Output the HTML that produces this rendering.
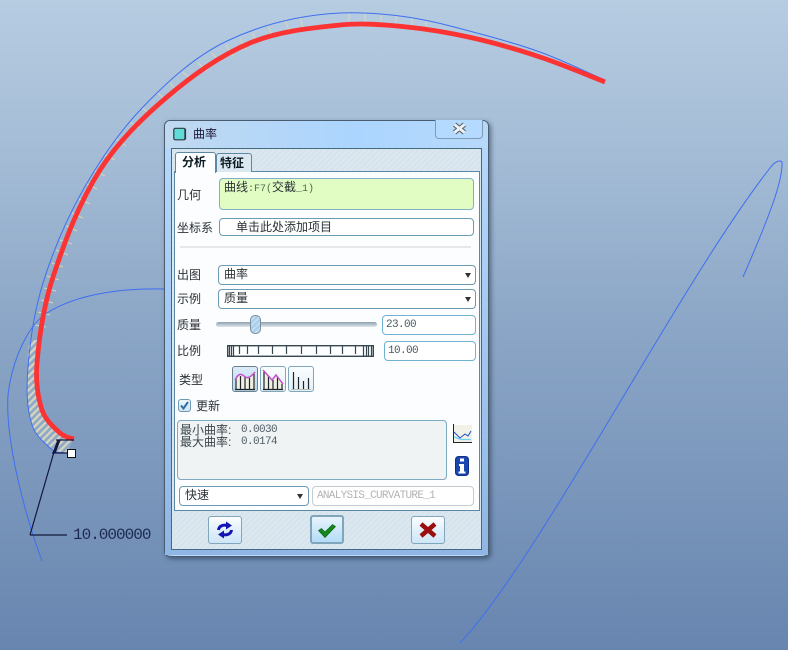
<!DOCTYPE html>
<html>
<head>
<meta charset="utf-8">
<style>
html,body{margin:0;padding:0;width:788px;height:650px;overflow:hidden}
body{position:relative;background:linear-gradient(180deg,#b6cce1 0%,#a3bbd5 25%,#8ba6c6 50%,#7a96bb 75%,#6785af 100%);font-family:"Liberation Sans","Noto Sans CJK SC",sans-serif;font-size:12px;color:#2b3236}
.a{position:absolute;box-sizing:border-box}
.l{position:absolute;line-height:16px;white-space:nowrap}
.f{position:absolute;box-sizing:border-box;background:#fff;border:1px solid #6d9ab3;border-radius:4px;line-height:17px;white-space:nowrap}
.arr{position:absolute;width:0;height:0;border-left:3.5px solid transparent;border-right:3.5px solid transparent;border-top:5px solid #333}
.btn{position:absolute;box-sizing:border-box;border:1px solid #7fa6bb;border-radius:3px;background:linear-gradient(180deg,#fbfdfe,#dceefa 60%,#cfe6f8)}
.stripe{background:repeating-linear-gradient(135deg,#dce8f0 0 2px,#d6e3ec 2px 4px)}
.m{font-family:"Liberation Mono","Noto Sans CJK SC",monospace}
.n{font-size:11px;letter-spacing:-.6px}
</style>
</head>
<body>
<svg class="a" style="left:0;top:0" width="788" height="650" viewBox="0 0 788 650">
<defs>
<pattern id="h" width="5" height="5" patternUnits="userSpaceOnUse" patternTransform="rotate(-45)">
<rect width="5" height="5" fill="#8fa9c6"/><rect width="5" height="2.2" fill="#d8d6c0"/>
</pattern>
</defs>
<path d="M30 340 C27 355 28 360 28 367 C26.500 386 26.100 406.500 32 425 C35.600 436 45.900 444.500 55 452 L66 453 L74 439 C69 438 63.700 436.400 60 433 C52.800 426.500 45 419 42 410 C37 395 35.700 379 37 363 L40 340 Z" fill="url(#h)"/>
<g stroke="#d9d6b8" stroke-width="1" fill="none">
<path d="M349 14V24M365 14V24M381 15V24M396 16V25M412 18V27M426 21V29M300 17L303 28M285 19L289 31M268 26L273 37M252 33L258 42M240 39L247 50M226 45L233 56M212 53L220 62M198 63L207 71M183 72L192 80M170 83L178 92M157 92L165 100M142 107L150 115M130 122L139 128M116 139L126 146M105 155L115 160M95 171L105 176M87 184L97 189M79 199L90 204M72 213L83 218M66 226L77 231M60 240L72 244M56 250L68 255M52 263L63 267M47 276L59 280M44 288L56 291M41 300L53 303M38 312L50 315M35 325L46 327"/>
</g>
<g fill="none" stroke="#3f6ff0" stroke-width="1">
<path d="M605 80 C583.300 70.800 562.200 60 540 52 C518.100 44.100 495.500 37.900 473 32 C451.100 26.200 429.400 20.200 407 17 C384.900 13.900 362.300 12 340 13 C301.200 15 262 24.300 227 41 C194.900 56.300 167.700 81.400 143 107 C119.400 131.400 99.800 160.500 83 190 C66.400 219.300 53 250.800 43 283 C34.600 310.100 30.200 338.700 28 367 C26.500 386.300 26.100 406.500 32 425 C35.600 436.200 45.900 444.500 55 452 L66 453"/>
<path d="M165 289 C130 288 80 292 47 313 C28 325 12 360 8 395 C5 440 25 515 42 561"/>
<path d="M460 643 C540 558 680 283 770 168 C775 161 780 160 782 162 C783 180 770 215 743 277"/>
</g>
<path d="M605 82 C583.300 73.400 562.100 64.400 540 57 C518 49.700 495.600 43.100 473 38 C451.300 33.100 429.200 29.200 407 27 C384.800 24.800 362.200 22.700 340 25 C309.600 28.100 278.200 31.200 250 43 C219.500 55.700 192.200 75.700 167 97 C141.800 118.300 117.700 142.100 100 170 C79.100 203 65.100 239.900 53 277 C44 304.600 39.400 334.100 37 363 C35.700 378.700 37.100 395.100 42 410 C45 419.200 52.800 426.500 60 433 C63.700 436.400 69.100 438 74 439" fill="none" stroke="#fb3333" stroke-width="4.800"/>
<g stroke="#12183c" fill="none">
<path d="M30 535H67" stroke-width="1.200"/>
<path d="M30 535L54 452" stroke-width="1.200"/>
<path d="M59 440L54 453" stroke-width="3"/>
<path d="M56 440H74" stroke-width="1.200"/>
<path d="M52 453H68" stroke-width="1.200"/>
</g>
<rect x="67.500" y="449.500" width="8" height="8" fill="#fff" stroke="#111" stroke-width="1"/>
</svg>
<div class="l m" style="left:73px;top:527px;font-size:16px;letter-spacing:-1px;color:#1c2a52">10.000000</div>

<!-- dialog -->
<div class="a" style="left:164px;top:120px;width:325px;height:437px;border:1px solid #4a5d70;border-radius:6px;background:linear-gradient(90deg,#8eb6e3 0,#b8dafb 3%,#b8dafb 97%,#8eb6e3 100%);box-shadow:2px 2px 5px rgba(30,45,70,.55)"></div>
<div class="a" style="left:165px;top:121px;width:323px;height:27px;border-radius:5px 5px 0 0;background:linear-gradient(90deg,#c0d9f0,#abd5ff 60%,#b7d9fa)"></div>
<div class="a" style="left:165px;top:148px;width:6px;height:407px;background:linear-gradient(180deg,#b4d8fb,#8fb6e4)"></div>
<div class="a" style="left:482px;top:148px;width:6px;height:407px;background:linear-gradient(180deg,#b4d8fb,#8fb6e4)"></div>
<div class="a" style="left:165px;top:549px;width:323px;height:6px;background:#8fb6e4;border-radius:0 0 5px 5px"></div>
<svg class="a" style="left:173px;top:127px" width="14" height="14" viewBox="0 0 14 14"><rect x=".8" y="1.300" width="11.500" height="11.500" rx="1.500" fill="#5fdbd8" stroke="#2c3a3e" stroke-width="1.200"/><path d="M12.200 2V12.500" stroke="#2c3a3e" stroke-width="1.800"/></svg>
<div class="l" style="left:193px;top:126px;color:#1f1636">曲率</div>
<div class="a" style="left:435px;top:120px;width:48px;height:19px;border:1px solid #7f9cb4;border-top:none;border-radius:0 0 4px 4px;background:#b5daff"></div>
<svg class="a" style="left:452px;top:122px" width="15" height="13" viewBox="0 0 15 13"><path d="M2.500 2.500L12.500 10.500M12.500 2.500L2.500 10.500" stroke="#5d6670" stroke-width="5"/><path d="M2.500 2.500L12.500 10.500M12.500 2.500L2.500 10.500" stroke="#eef1f4" stroke-width="2.800"/></svg>

<div class="a stripe" style="left:171px;top:148px;width:311px;height:402px;border:1px solid #45697f"></div>
<div class="a" style="left:174px;top:171px;width:306px;height:340px;background:#fcfdff;border:1px solid #5a88a5"></div>
<div class="a" style="left:175px;top:152px;width:41px;height:21px;background:#fcfdff;border:1px solid #5a88a5;border-bottom:none;border-radius:3px 3px 0 0"></div>
<div class="a" style="left:216px;top:153px;width:36px;height:19px;background:#dbe8f1;border:1px solid #5a88a5;border-bottom:none;border-radius:3px 3px 0 0"></div>
<div class="l" style="left:182px;top:154px;font-weight:bold;color:#0d1c22">分析</div>
<div class="l" style="left:220px;top:155px;font-weight:bold;color:#0d1c22">特征</div>

<div class="l" style="left:177px;top:187px">几何</div>
<div class="f" style="left:219px;top:178px;width:255px;height:32px;background:#e1fdc4;border-color:#7fb0c8;padding-left:4px;line-height:16px">曲线<span class="m" style="font-size:10px;color:#4f6a50">:F7(</span>交截<span class="m" style="font-size:10px;color:#4f6a50">_1)</span></div>
<div class="l" style="left:177px;top:220px">坐标系</div>
<div class="f" style="left:219px;top:218px;width:255px;height:18px;padding-left:16px;line-height:16px">单击此处添加项目</div>
<div class="a" style="left:180px;top:246px;width:291px;height:2px;background:#e4e8ea"></div>

<div class="l" style="left:177px;top:267px">出图</div>
<div class="f" style="left:218px;top:265px;width:258px;height:20px;padding-left:5px">曲率</div>
<div class="arr" style="left:465px;top:273px"></div>
<div class="l" style="left:177px;top:291px">示例</div>
<div class="f" style="left:218px;top:289px;width:258px;height:20px;padding-left:5px">质量</div>
<div class="arr" style="left:465px;top:297px"></div>

<div class="l" style="left:177px;top:317px">质量</div>
<div class="a" style="left:216px;top:322px;width:161px;height:5px;border-radius:3px;background:linear-gradient(180deg,#8ba2ad,#dfe6ea)"></div>
<div class="a" style="left:250px;top:315px;width:11px;height:19px;border:1px solid #7d8f9c;border-radius:5px;background:repeating-linear-gradient(135deg,#a9cdec 0 2px,#c2dcf2 2px 4px)"></div>
<div class="f m n" style="left:382px;top:315px;width:94px;height:20px;border-color:#6fb2d2;padding-left:3px;color:#4a5a64;line-height:18px">23.00</div>

<div class="l" style="left:177px;top:343px">比例</div>
<svg class="a" style="left:227px;top:345px" width="147" height="12" viewBox="0 0 147 12">
<rect x=".7" y=".7" width="145.600" height="10.600" fill="#fdfeff" stroke="#37474f" stroke-width="1.400"/>
<path d="M2.500 1V11M4.500 1V11M6.500 1V11M12.500 1V9M20.500 1V9M31.500 1V9M45.500 1V9M59.500 1V9M74.500 1V9M89.500 1V9M103.500 1V9M115.500 1V9M128.500 1V9M136.500 1V11M139.500 1V11M141.500 1V11M144.500 1V11" stroke="#37474f" stroke-width="1.200" fill="none"/>
</svg>
<div class="f m n" style="left:384px;top:341px;width:92px;height:20px;border-color:#6fb2d2;padding-left:3px;color:#4a5a64;line-height:18px">10.00</div>

<div class="l" style="left:179px;top:372px">类型</div>
<div class="btn" style="left:232px;top:366px;width:26px;height:26px;border-color:#6d7f8c;background:linear-gradient(180deg,#dcebf7,#b6daf7)"></div>
<svg class="a" style="left:232px;top:366px" width="26" height="26" viewBox="0 0 26 26"><path d="M3 23V14C6 8 9 7 12 10C15 13 18 12 23 6V23Z" fill="#efefe4"/><path d="M4 23V12M8.500 23V10M13 23V11M17.500 23V12M22 23V8M3 23.500H23" stroke="#1e2327" stroke-width="1.200" fill="none"/><path d="M3 14C6 8 9 7 12 10C15 13 18 12 23 6" stroke="#c64fd0" stroke-width="1.500" fill="none"/></svg>
<div class="btn" style="left:260px;top:366px;width:26px;height:26px;background:linear-gradient(180deg,#fbfdfe,#e4f0f8)"></div>
<svg class="a" style="left:260px;top:366px" width="26" height="26" viewBox="0 0 26 26"><path d="M3 4L12 14L16 9L23 18V23H3Z" fill="#efefe4"/><path d="M4 23V6M8.500 23V10M13 23V14M17.500 23V11M22 23V18M3 23.500H23" stroke="#1e2327" stroke-width="1.200" fill="none"/><path d="M3 4L12 14L16 9L23 18" stroke="#c64fd0" stroke-width="1.500" fill="none"/></svg>
<div class="btn" style="left:288px;top:366px;width:26px;height:26px;background:linear-gradient(180deg,#fbfdfe,#e4f0f8)"></div>
<svg class="a" style="left:288px;top:366px" width="26" height="26" viewBox="0 0 26 26"><path d="M5.500 6V23M10.500 11V23M15.500 15V23M20.500 12V23" stroke="#1e2327" stroke-width="1.200" fill="none"/><path d="M3 23.500H23" stroke="#b9bdb0"/></svg>

<div class="a" style="left:178px;top:399px;width:13px;height:13px;border:1px solid #6d9ab3;border-radius:3px;background:linear-gradient(180deg,#eef6fb,#cfe3f2)"></div>
<svg class="a" style="left:179px;top:400px" width="11" height="11" viewBox="0 0 11 11"><path d="M2 5.500L4.500 8.500L9 2" stroke="#2f6ea5" stroke-width="2" fill="none"/></svg>
<div class="l" style="left:196px;top:398px">更新</div>

<div class="a" style="left:177px;top:420px;width:270px;height:60px;background:#eff3f4;border:1px solid #7da9c1;border-radius:4px"></div>
<div class="l" style="left:180px;top:422px;color:#3a444a">最小曲率:</div>
<div class="l m n" style="left:241px;top:422px;color:#505c66">0.0030</div>
<div class="l" style="left:180px;top:434px;color:#3a444a">最大曲率:</div>
<div class="l m n" style="left:241px;top:434px;color:#505c66">0.0174</div>

<svg class="a" style="left:453px;top:424px" width="19" height="20" viewBox="0 0 19 20"><rect x="0" y="1" width="19" height="18" fill="#f1f1e8"/><path d="M.5 0V18.500H19" stroke="#222" fill="none"/><path d="M1 8L7 14L12 10L15 12L18 7" stroke="#1e4fc8" fill="none"/><path d="M1 13L8 15.500H18" stroke="#6fd0f0" stroke-width="1.200" fill="none"/></svg>
<svg class="a" style="left:455px;top:456px" width="14" height="20" viewBox="0 0 14 20"><rect x=".5" y=".5" width="13" height="19" rx="3" fill="#1a46b0" stroke="#0f2f85"/><path d="M5 2.500H9V5.500H5ZM4 8H9V15.500H10.500V17.500H3.500V15.500H5V10H4Z" fill="#fff"/></svg>

<div class="f" style="left:179px;top:486px;width:130px;height:20px;padding-left:5px">快速</div>
<div class="arr" style="left:297px;top:494px"></div>
<div class="f m" style="left:312px;top:486px;width:162px;height:20px;border-color:#c6ccce;padding-left:4px;color:#b4b6b2;font-size:11px;letter-spacing:-.7px;line-height:18px">ANALYSIS_CURVATURE_1</div>

<div class="btn" style="left:208px;top:516px;width:34px;height:28px"></div>
<svg class="a" style="left:215px;top:520px" width="20" height="20" viewBox="0 0 20 20"><path d="M3.500 10C4 6 8 4.500 12 5.500M16.500 10C16 14 12 15.500 8 14.500" stroke="#1414b4" stroke-width="3" fill="none"/><path d="M11 1.500L17 5.500L11 9.500ZM9 10.500L3 14.500L9 18.500Z" fill="#1414b4"/></svg>
<div class="btn" style="left:310px;top:515px;width:34px;height:29px;border:2px solid #7fa6bb;background:linear-gradient(180deg,#e8f3fa,#b4dcf8)"></div>
<svg class="a" style="left:318px;top:524px" width="18" height="14" viewBox="0 0 18 14"><path d="M0.500 6.500L3.500 4.500L7 8L14.500 .5L17.500 2.500L7 13.500Z" fill="#118a1a" stroke="#0b5c10" stroke-width=".6"/></svg>
<div class="btn" style="left:411px;top:516px;width:34px;height:28px"></div>
<svg class="a" style="left:419px;top:522px" width="18" height="16" viewBox="0 0 18 16"><path d="M2 2L16 14M16 2L2 14" stroke="#9a0e0e" stroke-width="4.500" fill="none"/></svg>
</body>
</html>
